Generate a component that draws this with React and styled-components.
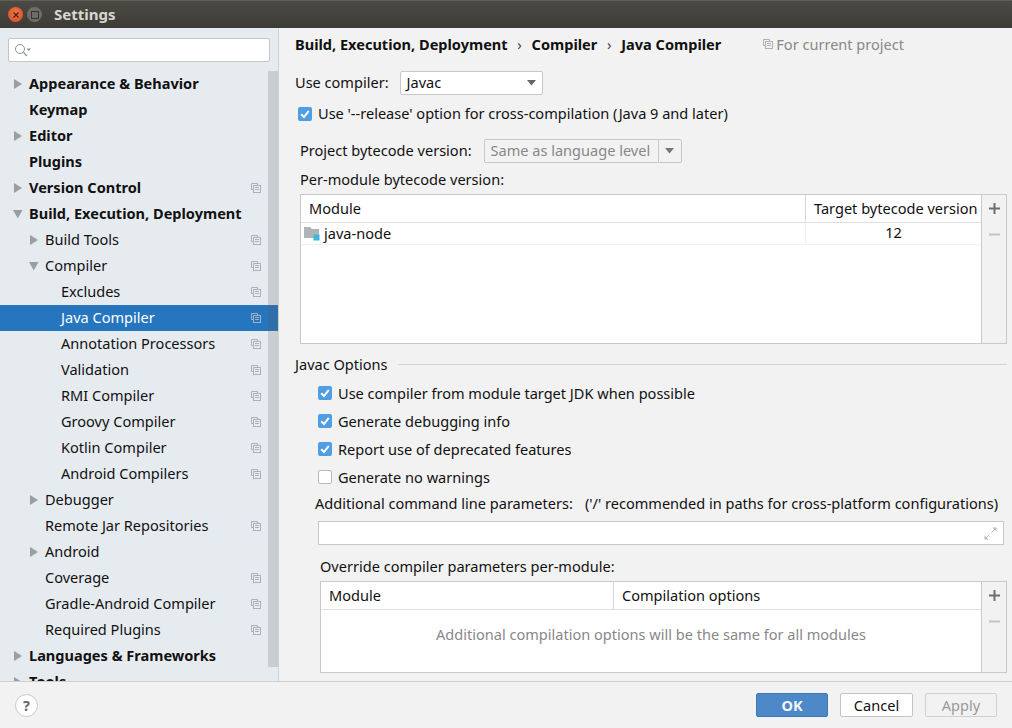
import React from "react";
import styled, { createGlobalStyle } from "styled-components";

const GlobalStyle = createGlobalStyle`
  html, body {
    margin: 0;
    padding: 0;
    height: 100%;
    overflow: hidden;
    background: #f2f2f2;
    font-family: "Noto Sans", "Liberation Sans", sans-serif;
    font-size: 14.55px;
    color: #111;
  }
`;

const treeRows = [
  { label: "Appearance & Behavior", bold: true, level: 0, arrow: "right" },
  { label: "Keymap", bold: true, level: 0 },
  { label: "Editor", bold: true, level: 0, arrow: "right" },
  { label: "Plugins", bold: true, level: 0 },
  { label: "Version Control", bold: true, level: 0, arrow: "right", copy: true },
  { label: "Build, Execution, Deployment", bold: true, level: 0, arrow: "down" },
  { label: "Build Tools", level: 1, arrow: "right", copy: true },
  { label: "Compiler", level: 1, arrow: "down", copy: true },
  { label: "Excludes", level: 2, copy: true },
  { label: "Java Compiler", level: 2, copy: true, selected: true },
  { label: "Annotation Processors", level: 2, copy: true },
  { label: "Validation", level: 2, copy: true },
  { label: "RMI Compiler", level: 2, copy: true },
  { label: "Groovy Compiler", level: 2, copy: true },
  { label: "Kotlin Compiler", level: 2, copy: true },
  { label: "Android Compilers", level: 2, copy: true },
  { label: "Debugger", level: 1, arrow: "right" },
  { label: "Remote Jar Repositories", level: 1, copy: true },
  { label: "Android", level: 1, arrow: "right" },
  { label: "Coverage", level: 1, copy: true },
  { label: "Gradle-Android Compiler", level: 1, copy: true },
  { label: "Required Plugins", level: 1, copy: true },
  { label: "Languages & Frameworks", bold: true, level: 0, arrow: "right" },
  { label: "Tools", bold: true, level: 0, arrow: "right" },
];

const javacOptions = [
  { label: "Use compiler from module target JDK when possible", checked: true },
  { label: "Generate debugging info", checked: true },
  { label: "Report use of deprecated features", checked: true },
  { label: "Generate no warnings", checked: false },
];

function CopyIcon() {
  return (
    <svg width="10" height="10" viewBox="0 0 10 10" fill="none" stroke="#aab2b9" strokeWidth="1">
      <path d="M6.5 2V0.5H0.5V6.5H2" />
      <rect x="2.5" y="2.5" width="7" height="7" />
      <path d="M4 4.5H8M4 6.5H8" />
    </svg>
  );
}

function TreeArrow({ dir }) {
  return (
    <svg width="10" height="10" viewBox="0 0 10 10" fill="#9a9da1">
      {dir === "down" ? <path d="M0 1H9.5L4.75 9.5Z" /> : <path d="M1 0V10L9 5Z" />}
    </svg>
  );
}

function SearchIcon() {
  return (
    <svg width="18" height="14" viewBox="0 0 18 14" fill="none" stroke="#8e9296" strokeWidth="1">
      <circle cx="6" cy="6" r="4.5" />
      <path d="M9.5 9.5L13 13" strokeWidth="1.3" />
      <path d="M12.5 5.5H17L14.75 8Z" fill="#8e9296" stroke="none" />
    </svg>
  );
}

function Check() {
  return (
    <svg width="14" height="14" viewBox="0 0 14 14" fill="none" stroke="#fff" strokeWidth="2">
      <path d="M3.2 7.2L6 10L10.8 3.8" />
    </svg>
  );
}

function ComboArrow({ color }) {
  return (
    <svg width="9" height="6" viewBox="0 0 9 6" fill={color}>
      <path d="M0 0H9L4.5 5.5Z" />
    </svg>
  );
}

function PlusIcon() {
  return (
    <svg width="11" height="11" viewBox="0 0 11 11" stroke="#6e6e6e" strokeWidth="2">
      <path d="M0 5.5H11M5.5 0V11" />
    </svg>
  );
}

function MinusIcon() {
  return (
    <svg width="11" height="11" viewBox="0 0 11 11" stroke="#c4c4c4" strokeWidth="2">
      <path d="M0 5.5H11" />
    </svg>
  );
}

function ModuleIcon() {
  return (
    <svg width="16" height="14" viewBox="0 0 16 14">
      <path d="M0 0H6L8 2H15V11H0Z" fill="#afb4b9" />
      <rect x="9.5" y="7.5" width="6" height="6" fill="#40b6e0" />
    </svg>
  );
}

function ExpandIcon() {
  return (
    <svg width="13" height="13" viewBox="0 0 13 13" fill="#b9b9b9" stroke="#b9b9b9">
      <path d="M7.5 5.5L12 1" fill="none" />
      <path d="M8.5 0.5H12.5V4.5Z" stroke="none" />
      <path d="M5.5 7.5L1 12" fill="none" />
      <path d="M0.5 8.5V12.5H4.5Z" stroke="none" />
    </svg>
  );
}

export default function App() {
  return (
    <Window>
      <GlobalStyle />
      <TitleBar>
        <CloseBtn>
          <svg width="6" height="6" viewBox="0 0 6 6" stroke="#3c2014" strokeWidth="1.1">
            <path d="M0.5 0.5L5.5 5.5M5.5 0.5L0.5 5.5" />
          </svg>
        </CloseBtn>
        <MaxBtn>
          <MaxGlyph />
        </MaxBtn>
        <WinTitle>Settings</WinTitle>
      </TitleBar>
      <Body>
        <Sidebar>
          <SearchBox>
            <SearchIcon />
          </SearchBox>
          <Tree>
            {treeRows.map((r) => (
              <TreeRow key={r.label} $level={r.level} $selected={r.selected}>
                <ArrowSlot>{r.arrow && <TreeArrow dir={r.arrow} />}</ArrowSlot>
                <TreeLabel $bold={r.bold} $selected={r.selected}>{r.label}</TreeLabel>
                {r.copy && (
                  <CopySlot>
                    <CopyIcon />
                  </CopySlot>
                )}
              </TreeRow>
            ))}
            <ScrollThumb />
          </Tree>
        </Sidebar>
        <Main>
          <Breadcrumb>
            <Crumb>Build, Execution, Deployment</Crumb>
            <Sep>›</Sep>
            <Crumb>Compiler</Crumb>
            <Sep>›</Sep>
            <Crumb>Java Compiler</Crumb>
            <ProjectHint>
              <CopyIcon />
              For current project
            </ProjectHint>
          </Breadcrumb>

          <CompilerRow>
            <RowText>Use compiler:</RowText>
            <Combo>
              <RowText>Javac</RowText>
              <ComboArrow color="#666" />
            </Combo>
          </CompilerRow>

          <ReleaseRow>
            <CheckBox $checked>
              <Check />
            </CheckBox>
            <RowText>Use '--release' option for cross-compilation (Java 9 and later)</RowText>
          </ReleaseRow>

          <BytecodeRow>
            <RowText>Project bytecode version:</RowText>
            <DisabledCombo>
              <DisabledValue>
                <RowText>Same as language level</RowText>
              </DisabledValue>
              <DisabledArrow>
                <ComboArrow color="#777" />
              </DisabledArrow>
            </DisabledCombo>
          </BytecodeRow>

          <PerModuleLabel>Per-module bytecode version:</PerModuleLabel>

          <TablePanel $left={300} $height={150}>
            <TableBody>
              <TableHead>
                <HeadCell $width={505}>Module</HeadCell>
                <HeadCell $grow $divider>Target bytecode version</HeadCell>
              </TableHead>
              <DataRow>
                <ModuleCell>
                  <ModuleIcon />
                  <RowText>java-node</RowText>
                </ModuleCell>
                <VersionCell>12</VersionCell>
              </DataRow>
            </TableBody>
            <SideTools>
              <ToolBtn>
                <PlusIcon />
              </ToolBtn>
              <ToolBtn>
                <MinusIcon />
              </ToolBtn>
            </SideTools>
          </TablePanel>

          <GroupTitle>
            <span>Javac Options</span>
            <GroupLine />
          </GroupTitle>

          <OptionList>
            {javacOptions.map((o) => (
              <OptionRow key={o.label}>
                <CheckBox $checked={o.checked}>{o.checked && <Check />}</CheckBox>
                {o.label}
              </OptionRow>
            ))}
          </OptionList>

          <ParamsRow>
            <span>Additional command line parameters:</span>
            <span>('/' recommended in paths for cross-platform configurations)</span>
          </ParamsRow>

          <ParamsInput>
            <ExpandIcon />
          </ParamsInput>

          <OverrideLabel>Override compiler parameters per-module:</OverrideLabel>

          <TablePanel $left={320} $height={92}>
            <TableBody>
              <TableHead>
                <HeadCell $width={293}>Module</HeadCell>
                <HeadCell $grow $divider>Compilation options</HeadCell>
              </TableHead>
              <EmptyText>Additional compilation options will be the same for all modules</EmptyText>
            </TableBody>
            <SideTools>
              <ToolBtn>
                <PlusIcon />
              </ToolBtn>
              <ToolBtn>
                <MinusIcon />
              </ToolBtn>
            </SideTools>
          </TablePanel>
        </Main>
      </Body>
      <Footer>
        <HelpBtn>?</HelpBtn>
        <Buttons>
          <OkButton>OK</OkButton>
          <CancelButton>Cancel</CancelButton>
          <ApplyButton>Apply</ApplyButton>
        </Buttons>
      </Footer>
    </Window>
  );
}

const Window = styled.div`
  display: flex;
  flex-direction: column;
  width: 1012px;
  height: 728px;
  overflow: hidden;
  background: #f2f2f2;
`;

const TitleBar = styled.div`
  display: flex;
  align-items: center;
  height: 28px;
  flex: none;
  padding-left: 8px;
  box-sizing: border-box;
  background: linear-gradient(#4a4943, #3d3c37);
  border-top: 1px solid #5f5e58;
`;

const CloseBtn = styled.div`
  display: flex;
  align-items: center;
  justify-content: center;
  width: 15px;
  height: 15px;
  border-radius: 50%;
  background: radial-gradient(circle at 50% 40%, #f0764a, #d9481c);
`;

const MaxBtn = styled.div`
  display: flex;
  align-items: center;
  justify-content: center;
  width: 15px;
  height: 15px;
  margin-left: 4px;
  border-radius: 50%;
  background: #6e6d68;
`;

const MaxGlyph = styled.div`
  width: 6px;
  height: 6px;
  border: 1px solid #35342f;
`;

const WinTitle = styled.div`
  margin: -2px 0 0 12px;
  font-size: 15px;
  font-weight: 700;
  color: #d9d6cf;
`;

const Body = styled.div`
  display: flex;
  flex: 1;
  min-height: 0;
`;

const Sidebar = styled.div`
  display: flex;
  flex-direction: column;
  width: 279px;
  flex: none;
  box-sizing: border-box;
  background: #e6ebf0;
  border-right: 1px solid #d0d0d0;
  overflow: hidden;
`;

const SearchBox = styled.div`
  display: flex;
  align-items: center;
  flex: none;
  width: 262px;
  height: 24px;
  margin: 10px 0 9px 8px;
  padding-left: 5px;
  box-sizing: border-box;
  background: #fff;
  border: 1px solid #c4c4c4;
  border-radius: 2px;
`;

const Tree = styled.div`
  position: relative;
  flex: 1;
  min-height: 0;
  overflow: hidden;
`;

const TreeRow = styled.div`
  display: flex;
  align-items: center;
  height: 26px;
  padding-left: ${(p) => 13 + p.$level * 16}px;
  background: ${(p) => (p.$selected ? "#2675bf" : "transparent")};
`;

const ArrowSlot = styled.div`
  display: flex;
  align-items: center;
  width: 16px;
  flex: none;
`;

const TreeLabel = styled.span`
  margin-top: -2px;
  font-weight: ${(p) => (p.$bold ? 700 : 400)};
  color: ${(p) => (p.$selected ? "#fff" : "#111")};
  white-space: nowrap;
`;

const CopySlot = styled.div`
  display: flex;
  margin-left: auto;
  margin-right: 17px;
`;

const ScrollThumb = styled.div`
  position: absolute;
  top: 0;
  right: 0;
  width: 10px;
  height: 596px;
  background: rgba(90, 90, 90, 0.2);
`;

const Main = styled.div`
  position: relative;
  flex: 1;
  min-width: 0;
  padding: 0 5px 0 16px;
  overflow: hidden;
`;

const Breadcrumb = styled.div`
  display: flex;
  align-items: center;
  height: 20px;
  margin-top: 6px;
  font-weight: 700;
`;

const Crumb = styled.span`
  white-space: nowrap;
`;

const Sep = styled.span`
  width: 24px;
  text-align: center;
  font-weight: 400;
  color: #444;
`;

const ProjectHint = styled.span`
  display: flex;
  align-items: center;
  gap: 3px;
  margin-left: 42px;
  font-weight: 400;
  color: #888;
`;

const RowText = styled.span`
  margin-top: -2px;
  white-space: nowrap;
`;

const CompilerRow = styled.div`
  display: flex;
  align-items: center;
  height: 24px;
  margin-top: 17px;
`;

const Combo = styled.div`
  display: flex;
  align-items: center;
  justify-content: space-between;
  width: 143px;
  height: 24px;
  margin-left: 11px;
  padding: 0 6px;
  box-sizing: border-box;
  background: #fff;
  border: 1px solid #c8c8c8;
  border-radius: 2px;
`;

const ReleaseRow = styled.div`
  display: flex;
  align-items: center;
  gap: 6px;
  height: 20px;
  margin: 9px 0 0 3px;
`;

const CheckBox = styled.div`
  display: flex;
  align-items: center;
  justify-content: center;
  width: 14px;
  height: 14px;
  flex: none;
  box-sizing: border-box;
  border-radius: 2px;
  background: ${(p) => (p.$checked ? "#4f9ee3" : "#fff")};
  border: ${(p) => (p.$checked ? "none" : "1px solid #b8b8b8")};
`;

const BytecodeRow = styled.div`
  display: flex;
  align-items: center;
  height: 24px;
  margin: 15px 0 0 5px;
`;

const DisabledCombo = styled.div`
  display: flex;
  width: 198px;
  height: 24px;
  margin-left: 12px;
  box-sizing: border-box;
  border: 1px solid #c8c8c8;
  border-radius: 2px;
`;

const DisabledValue = styled.div`
  display: flex;
  align-items: center;
  flex: 1;
  padding-left: 6px;
  color: #888;
`;

const DisabledArrow = styled.div`
  display: flex;
  align-items: center;
  justify-content: center;
  width: 22px;
  border-left: 1px solid #c8c8c8;
`;

const PerModuleLabel = styled.div`
  height: 20px;
  line-height: 20px;
  margin: 6px 0 5px 5px;
`;

const TablePanel = styled.div`
  display: flex;
  width: ${(p) => 1007 - p.$left}px;
  height: ${(p) => p.$height}px;
  margin-left: ${(p) => p.$left - 295}px;
  box-sizing: border-box;
  border: 1px solid #c9c9c9;
`;

const TableBody = styled.div`
  display: flex;
  flex-direction: column;
  flex: 1;
  min-width: 0;
  background: #fff;
`;

const TableHead = styled.div`
  display: flex;
  align-items: center;
  height: 28px;
  flex: none;
  box-sizing: border-box;
  border-bottom: 1px solid #e0e0e0;
`;

const HeadCell = styled.div`
  display: flex;
  align-items: center;
  box-sizing: border-box;
  height: 100%;
  padding: 0 0 2px 8px;
  white-space: nowrap;
  ${(p) => (p.$width ? `width: ${p.$width - 1}px;` : "")}
  ${(p) => (p.$grow ? "flex: 1;" : "")}
  ${(p) => (p.$divider ? "border-left: 1px solid #d8d8d8;" : "")}
`;

const DataRow = styled.div`
  display: flex;
  align-items: center;
  height: 22px;
  box-sizing: border-box;
  border-bottom: 1px solid #f0f0f0;
`;

const ModuleCell = styled.div`
  display: flex;
  align-items: center;
  gap: 4px;
  width: 504px;
  height: 100%;
  padding-left: 3px;
  box-sizing: border-box;
`;

const VersionCell = styled.div`
  flex: 1;
  text-align: center;
  height: 100%;
  line-height: 19px;
  border-left: 1px solid #f0f0f0;
`;

const SideTools = styled.div`
  display: flex;
  flex-direction: column;
  width: 25px;
  flex: none;
  box-sizing: border-box;
  border-left: 1px solid #c9c9c9;
`;

const ToolBtn = styled.div`
  display: flex;
  align-items: center;
  justify-content: center;
  height: 26px;
`;

const GroupTitle = styled.div`
  display: flex;
  align-items: center;
  height: 20px;
  margin-top: 10px;
`;

const GroupLine = styled.div`
  flex: 1;
  height: 1px;
  margin-left: 10px;
  background: #d4d4d4;
`;

const OptionList = styled.div`
  display: flex;
  flex-direction: column;
  margin: 5px 0 0 23px;
`;

const OptionRow = styled.div`
  display: flex;
  align-items: center;
  gap: 6px;
  height: 28px;
`;

const ParamsRow = styled.div`
  display: flex;
  gap: 12px;
  height: 20px;
  line-height: 20px;
  margin: 2px 0 0 20px;
  white-space: nowrap;
`;

const ParamsInput = styled.div`
  display: flex;
  align-items: center;
  justify-content: flex-end;
  width: 686px;
  height: 24px;
  margin: 8px 0 0 23px;
  padding-right: 6px;
  box-sizing: border-box;
  background: #fff;
  border: 1px solid #c8c8c8;
`;

const OverrideLabel = styled.div`
  height: 20px;
  line-height: 20px;
  margin: 11px 0 5px 25px;
`;

const EmptyText = styled.div`
  display: flex;
  align-items: center;
  justify-content: center;
  flex: 1;
  padding-bottom: 15px;
  color: #888;
`;

const Footer = styled.div`
  display: flex;
  align-items: center;
  justify-content: space-between;
  height: 47px;
  flex: none;
  padding: 0 15px;
  box-sizing: border-box;
  border-top: 1px solid #cfcfcf;
  background: #f2f2f2;
`;

const HelpBtn = styled.div`
  display: flex;
  align-items: center;
  justify-content: center;
  width: 23px;
  height: 23px;
  box-sizing: border-box;
  border-radius: 50%;
  background: #fff;
  border: 1px solid #c8c8c8;
  font-weight: 700;
  color: #666;
`;

const Buttons = styled.div`
  display: flex;
  gap: 12px;
`;

const BaseButton = styled.div`
  display: flex;
  align-items: center;
  justify-content: center;
  height: 24px;
  box-sizing: border-box;
  border-radius: 2px;
`;

const OkButton = styled(BaseButton)`
  width: 72px;
  background: #4d89c9;
  border: 1px solid #3f78b5;
  color: #f2f6fa;
  font-weight: 700;
`;

const CancelButton = styled(BaseButton)`
  width: 73px;
  background: #fff;
  border: 1px solid #c4c4c4;
`;

const ApplyButton = styled(BaseButton)`
  width: 72px;
  border: 1px solid #d0d0d0;
  color: #999;
`;
